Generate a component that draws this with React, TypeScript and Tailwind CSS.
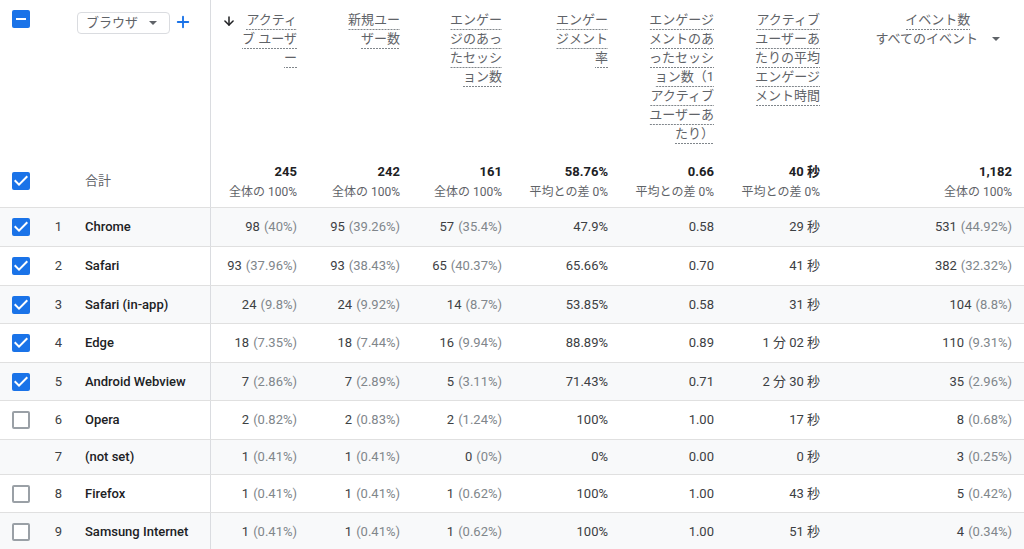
import { ArrowDown, Plus } from "lucide-react";

type CheckState = "checked" | "unchecked" | "indeterminate" | "none";

const Checkbox = ({ state }: { state: CheckState }) => {
  if (state === "none") return <div className="w-[18px] h-[18px]" />;
  if (state === "unchecked")
    return <div className="w-[18px] h-[18px] rounded-[2px] border-2 border-[#9aa0a6] bg-white" />;
  return (
    <div className="w-[18px] h-[18px] rounded-[2px] bg-[#1a73e8] flex items-center justify-center">
      <svg width="18" height="18" viewBox="3 3 18 18" fill="#fff">
        {state === "checked" ? (
          <path d="M10 17l-5-5 1.41-1.41L10 14.17l7.59-7.59L19 8l-9 9z" />
        ) : (
          <path d="M17 13H7v-2h10v2z" />
        )}
      </svg>
    </div>
  );
};

const Caret = () => (
  <svg width="8" height="4" viewBox="0 0 8 4" fill="#5f6368">
    <path d="M0 0h8L4 4z" />
  </svg>
);

// dashed underline for metric header words
const Dashed = ({ children }: { children: React.ReactNode }) => (
  <span className="whitespace-nowrap leading-[18px] pb-[1px] bg-[linear-gradient(to_right,#80868b_66%,transparent_0)] bg-[length:3px_1px] bg-bottom bg-repeat-x">
    {children}
  </span>
);

const metrics = [
  { lines: ["アクティ", "ブ ユーザ", "ー"], total: "245", sub: "全体の 100%", sort: true },
  { lines: ["新規ユー", "ザー数"], total: "242", sub: "全体の 100%" },
  { lines: ["エンゲー", "ジのあっ", "たセッシ", "ョン数"], total: "161", sub: "全体の 100%" },
  { lines: ["エンゲー", "ジメント", "率"], total: "58.76%", sub: "平均との差 0%" },
  {
    lines: ["エンゲージ", "メントのあ", "ったセッシ", "ョン数（1", "アクティブ", "ユーザーあ", "たり）"],
    total: "0.66",
    sub: "平均との差 0%",
  },
  { lines: ["アクティブ", "ユーザーあ", "たりの平均", "エンゲージ", "メント時間"], total: "40 秒", sub: "平均との差 0%" },
];

type Row = {
  name: string;
  check: CheckState;
  h: string;
  vals: [string, string][];
};

const rows: Row[] = [
  { name: "Chrome", check: "checked", h: "h-[39px]", vals: [["98", "(40%)"], ["95", "(39.26%)"], ["57", "(35.4%)"], ["47.9%", ""], ["0.58", ""], ["29 秒", ""], ["531", "(44.92%)"]] },
  { name: "Safari", check: "checked", h: "h-[39px]", vals: [["93", "(37.96%)"], ["93", "(38.43%)"], ["65", "(40.37%)"], ["65.66%", ""], ["0.70", ""], ["41 秒", ""], ["382", "(32.32%)"]] },
  { name: "Safari (in-app)", check: "checked", h: "h-[38px]", vals: [["24", "(9.8%)"], ["24", "(9.92%)"], ["14", "(8.7%)"], ["53.85%", ""], ["0.58", ""], ["31 秒", ""], ["104", "(8.8%)"]] },
  { name: "Edge", check: "checked", h: "h-[39px]", vals: [["18", "(7.35%)"], ["18", "(7.44%)"], ["16", "(9.94%)"], ["88.89%", ""], ["0.89", ""], ["1 分 02 秒", ""], ["110", "(9.31%)"]] },
  { name: "Android Webview", check: "checked", h: "h-[38px]", vals: [["7", "(2.86%)"], ["7", "(2.89%)"], ["5", "(3.11%)"], ["71.43%", ""], ["0.71", ""], ["2 分 30 秒", ""], ["35", "(2.96%)"]] },
  { name: "Opera", check: "unchecked", h: "h-[39px]", vals: [["2", "(0.82%)"], ["2", "(0.83%)"], ["2", "(1.24%)"], ["100%", ""], ["1.00", ""], ["17 秒", ""], ["8", "(0.68%)"]] },
  { name: "(not set)", check: "none", h: "h-[35px]", vals: [["1", "(0.41%)"], ["1", "(0.41%)"], ["0", "(0%)"], ["0%", ""], ["0.00", ""], ["0 秒", ""], ["3", "(0.25%)"]] },
  { name: "Firefox", check: "unchecked", h: "h-[38px]", vals: [["1", "(0.41%)"], ["1", "(0.41%)"], ["1", "(0.62%)"], ["100%", ""], ["1.00", ""], ["43 秒", ""], ["5", "(0.42%)"]] },
  { name: "Samsung Internet", check: "unchecked", h: "h-[39px]", vals: [["1", "(0.41%)"], ["1", "(0.41%)"], ["1", "(0.62%)"], ["100%", ""], ["1.00", ""], ["51 秒", ""], ["4", "(0.34%)"]] },
];

const grid = "grid grid-cols-[42px_33px_135px_99px_103px_102px_106px_106px_106px_192px]";

export default function App() {
  return (
    <div className="w-[1024px] h-[549px] overflow-hidden bg-white text-[13px] text-[#3c4043] font-[Roboto,'Noto_Sans_CJK_JP',sans-serif]">
      {/* header labels */}
      <div className={`${grid} h-[163px]`}>
        <div className="col-span-3 flex items-start">
          <div className="ml-[12px] mt-[10px]">
            <Checkbox state="indeterminate" />
          </div>
          <div className="ml-[47px] mt-[12px] w-[93px] h-[22px] border border-[#dadce0] rounded-[4px] flex items-center pl-[8px] pr-[12px] justify-between text-[#5f6368]">
            <span>ブラウザ</span>
            <Caret />
          </div>
          <Plus size={18} strokeWidth={2.5} className="ml-[4px] mt-[13px] text-[#1a73e8]" />
        </div>
        {metrics.map((m, i) => (
          <div
            key={i}
            className={`flex items-start justify-end pr-3 pt-[11px] text-[#5f6368] ${i === 0 ? "border-l border-[#dadce0]" : ""}`}
          >
            {m.sort && <ArrowDown size={14} strokeWidth={2.6} className="mt-[3px] mr-[6px] text-[#202124]" />}
            <div className="flex flex-col items-end">
              {m.lines.map((l) => (
                <Dashed key={l}>{l}</Dashed>
              ))}
            </div>
          </div>
        ))}
        <div className="flex justify-end pr-[24px] pt-[11px] text-[#5f6368]">
          <div className="flex flex-col items-center">
            <Dashed>イベント数</Dashed>
            <div className="flex items-center leading-[18px]">
              <span>すべてのイベント</span>
              <span className="ml-[14px]">
                <Caret />
              </span>
            </div>
          </div>
        </div>
      </div>

      {/* totals */}
      <div className={`${grid} h-[44px]`}>
        <div className="pl-[12px] pt-[9px]">
          <Checkbox state="checked" />
        </div>
        <div />
        <div className="pl-[10px] pt-[9px] leading-[18px] text-[#5f6368]">合計</div>
        {[...metrics.map((m) => [m.total, m.sub]), ["1,182", "全体の 100%"]].map(([t, s], i) => (
          <div
            key={i}
            className={`flex flex-col items-end pr-3 ${i === 0 ? "border-l border-[#dadce0]" : ""}`}
          >
            <span className="leading-[18px] font-bold text-[#202124]">{t}</span>
            <span className="mt-[3px] leading-[16px] text-[12px] text-[#5f6368]">{s}</span>
          </div>
        ))}
      </div>

      {/* data rows */}
      {rows.map((r, ri) => (
        <div
          key={r.name}
          className={`${grid} ${r.h} border-t border-[#e0e0e0] ${ri % 2 === 0 ? "bg-[#f8f9fa]" : "bg-white"}`}
        >
          <div className="flex items-center pl-[12px]">
            <Checkbox state={r.check} />
          </div>
          <div className="flex items-center justify-center">{ri + 1}</div>
          <div className="flex items-center pl-[10px] font-medium text-[#202124] whitespace-nowrap">{r.name}</div>
          {r.vals.map(([v, p], i) => (
            <div
              key={i}
              className={`flex items-center justify-end pr-3 whitespace-nowrap ${i === 0 ? "border-l border-[#dadce0]" : ""}`}
            >
              <span>{v}</span>
              {p && <span className="ml-[4px] text-[#80868b]">{p}</span>}
            </div>
          ))}
        </div>
      ))}
    </div>
  );
}
